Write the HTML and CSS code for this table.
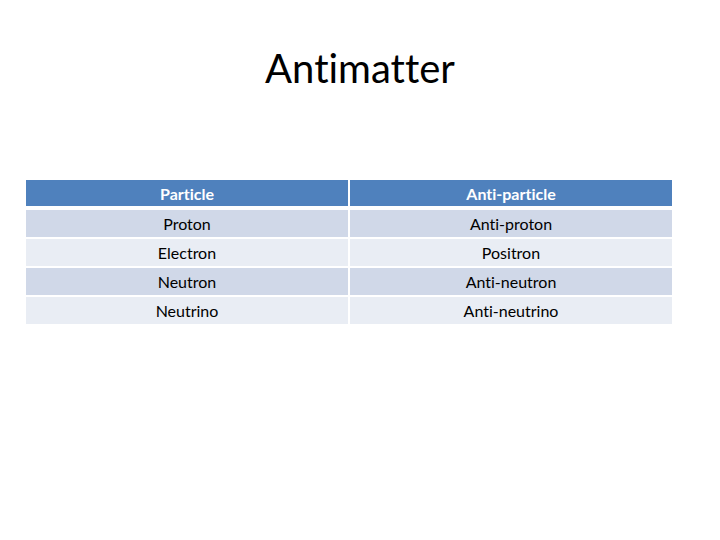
FILE: index.html
```html
<!DOCTYPE html>
<html>
<head>
<meta charset="utf-8">
<link rel="stylesheet" href="styles.css">
</head>
<body>
<div class="slide">
  <h1 class="title">Antimatter</h1>
  <div class="table">
    <div class="row head"><div class="cell">Particle</div><div class="cell">Anti-particle</div></div>
    <div class="row odd"><div class="cell">Proton</div><div class="cell">Anti-proton</div></div>
    <div class="row even"><div class="cell">Electron</div><div class="cell">Positron</div></div>
    <div class="row odd"><div class="cell">Neutron</div><div class="cell">Anti-neutron</div></div>
    <div class="row even"><div class="cell">Neutrino</div><div class="cell">Anti-neutrino</div></div>
  </div>
</div>
</body>
</html>
```
FILE: styles.css
```css
html, body {
  margin: 0;
  padding: 0;
  background: #ffffff;
}
.slide {
  width: 720px;
  height: 540px;
  font-family: Lato, "Open Sans", "Liberation Sans", sans-serif;
  font-variant-ligatures: none;
  padding-top: 44px;
  box-sizing: border-box;
}
.title {
  margin: 0;
  font-weight: normal;
  font-size: 40px;
  line-height: 48px;
  text-align: center;
  color: #000;
}
.table {
  margin: 88px 0 0 26px;
  width: 646px;
  display: flex;
  flex-direction: column;
  gap: 2px;
}
.row {
  display: grid;
  grid-template-columns: 322px 322px;
  column-gap: 2px;
  height: 27px;
}
.row.head {
  height: 26px;
  margin-bottom: 2px;
}
.cell {
  display: flex;
  align-items: center;
  justify-content: center;
  font-size: 16px;
  color: #000;
}
.head .cell {
  background: #4f81bd;
  color: #fff;
  font-weight: bold;
}
.odd .cell { background: #d0d8e8; }
.even .cell { background: #e9edf4; }
```
